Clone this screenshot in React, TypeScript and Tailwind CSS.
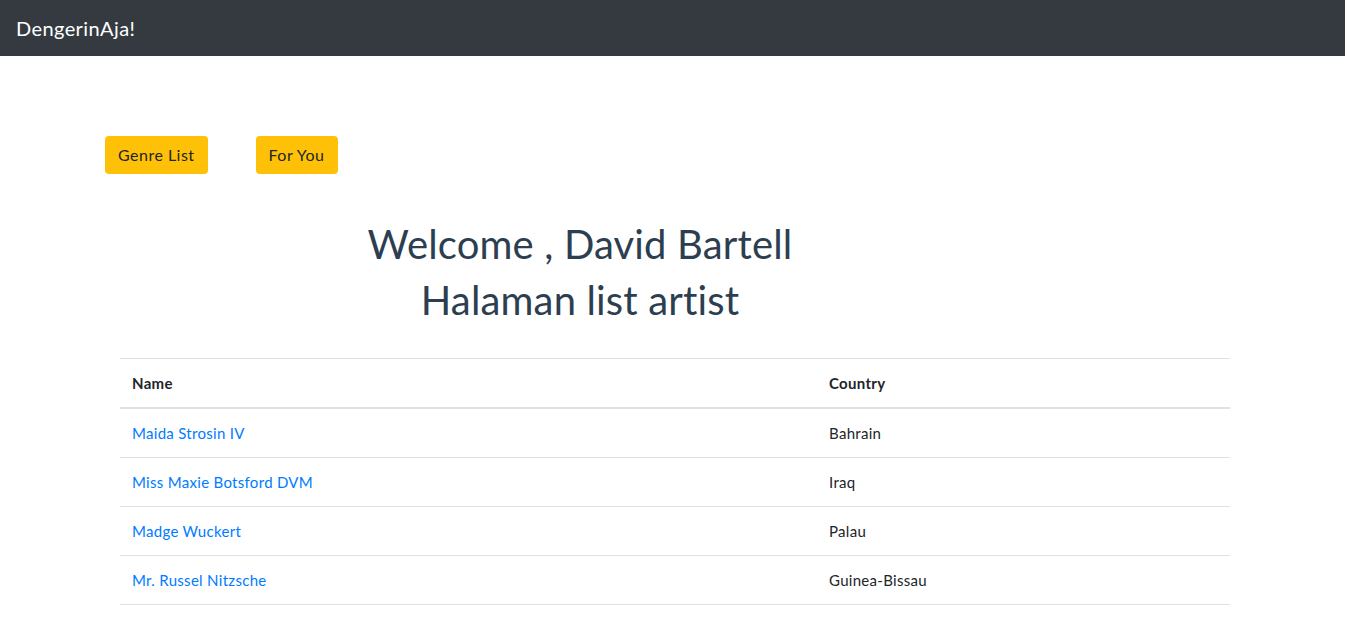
const artists = [
  { name: "Maida Strosin IV", country: "Bahrain" },
  { name: "Miss Maxie Botsford DVM", country: "Iraq" },
  { name: "Madge Wuckert", country: "Palau" },
  { name: "Mr. Russel Nitzsche", country: "Guinea-Bissau" },
  { name: "Wilfredo Reynolds", country: "Turkey" },
  { name: "Dr. Alena Kuhic", country: "Chile" },
];

export default function App() {
  return (
    <div className="min-h-screen bg-white font-['Lato',sans-serif] text-[#212529]">
      <nav className="h-14 bg-[#343a40] px-4 flex items-center">
        <span className="text-white text-[20px] tracking-[0.02em]">DengerinAja!</span>
      </nav>

      <div className="pt-20 pl-[105px] flex gap-12">
        <button className="h-[38px] px-[13px] rounded bg-[#ffc107] text-[#212529] text-[16px] tracking-[0.03em]">
          Genre List
        </button>
        <button className="h-[38px] px-[13px] rounded bg-[#ffc107] text-[#212529] text-[16px] tracking-[0.03em]">
          For You
        </button>
      </div>

      <div className="ml-[105px] w-[950px] mt-[46px] text-center text-[#2c3e50] tracking-[0.01em]">
        <h1 className="text-[40px] leading-[1.2] mb-2">Welcome , David Bartell</h1>
        <h1 className="text-[40px] leading-[1.2] mb-2">Halaman list artist</h1>
      </div>

      <div className="ml-[120px] w-[1110px] mt-[34px]">
        <table className="w-full border-collapse text-[15px] text-left tracking-[0.02em]">
          <thead>
            <tr className="border-t border-[#dee2e6]">
              <th className="w-[697px] px-3 py-3 leading-6 font-bold border-b-2 border-[#dee2e6]">Name</th>
              <th className="px-3 py-3 leading-6 font-bold border-b-2 border-[#dee2e6]">Country</th>
            </tr>
          </thead>
          <tbody>
            {artists.map((a) => (
              <tr key={a.name} className="border-b border-[#dee2e6]">
                <td className="px-3 py-3 leading-6">
                  <a href="#" className="text-[#007bff]">{a.name}</a>
                </td>
                <td className="px-3 py-3 leading-6">{a.country}</td>
              </tr>
            ))}
          </tbody>
        </table>
      </div>
    </div>
  );
}
